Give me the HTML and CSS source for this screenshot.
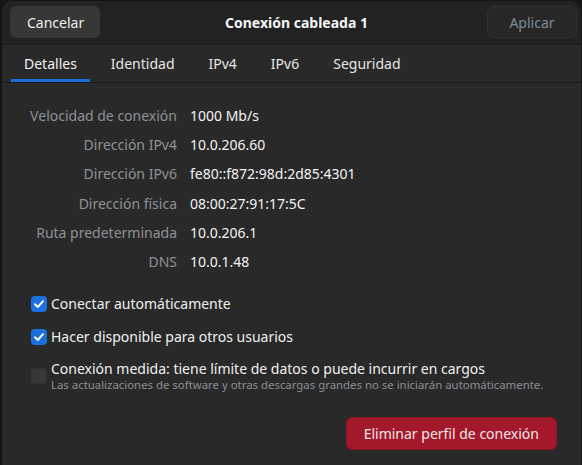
FILE: index.html
```html
<!DOCTYPE html>
<html lang="es">
<head>
<meta charset="utf-8">
<title>Conexión cableada 1</title>
<link rel="stylesheet" href="styles.css">
</head>
<body>
<div class="window">
  <header class="headerbar">
    <button class="btn btn-cancel">Cancelar</button>
    <div class="title">Conexión cableada 1</div>
    <button class="btn btn-apply" disabled>Aplicar</button>
  </header>
  <nav class="tabs">
    <div class="tab active">Detalles</div>
    <div class="tab">Identidad</div>
    <div class="tab">IPv4</div>
    <div class="tab">IPv6</div>
    <div class="tab">Seguridad</div>
  </nav>
  <main class="content">
    <div class="details">
      <div class="label">Velocidad de conexión</div><div class="value">1000 Mb/s</div>
      <div class="label">Dirección IPv4</div><div class="value">10.0.206.60</div>
      <div class="label">Dirección IPv6</div><div class="value">fe80::f872:98d:2d85:4301</div>
      <div class="label">Dirección física</div><div class="value">08:00:27:91:17:5C</div>
      <div class="label">Ruta predeterminada</div><div class="value">10.0.206.1</div>
      <div class="label">DNS</div><div class="value">10.0.1.48</div>
    </div>
    <div class="checks">
      <label class="check-row">
        <span class="box checked"><svg viewBox="0 0 16 16" width="16" height="16"><path d="M4 8.3 L6.8 11 L12 5.2" fill="none" stroke="#fff" stroke-width="2" stroke-linecap="round" stroke-linejoin="round"/></svg></span>
        <span class="check-text">Conectar automáticamente</span>
      </label>
      <label class="check-row">
        <span class="box checked"><svg viewBox="0 0 16 16" width="16" height="16"><path d="M4 8.3 L6.8 11 L12 5.2" fill="none" stroke="#fff" stroke-width="2" stroke-linecap="round" stroke-linejoin="round"/></svg></span>
        <span class="check-text">Hacer disponible para otros usuarios</span>
      </label>
      <label class="check-row">
        <span class="box"></span>
        <span class="check-text">
          <span class="check-title">Conexión medida: tiene límite de datos o puede incurrir en cargos</span>
          <span class="check-sub">Las actualizaciones de software y otras descargas grandes no se iniciarán automáticamente.</span>
        </span>
      </label>
    </div>
    <div class="actions">
      <button class="btn btn-danger">Eliminar perfil de conexión</button>
    </div>
  </main>
</div>
</body>
</html>
```
FILE: styles.css
```css
html, body {
  margin: 0;
  padding: 0;
  background: #161616;
  height: 100%;
  overflow: hidden;
}
body {
  font-family: "Noto Sans", "Open Sans", sans-serif;
  font-size: 14px;
  color: #f2f2f2;
}
.window {
  width: 579px;
  height: 470px;
  background: #292929;
  border-left: 2px solid #141414;
  border-top: 1px solid #141414;
  border-right: 1px solid #141414;
  border-radius: 12px 12px 0 0;
  display: flex;
  flex-direction: column;
  overflow: hidden;
}
.headerbar {
  display: flex;
  align-items: center;
  justify-content: space-between;
  padding: 5px 4px 6px 8px;
  background: #222222;
  border-bottom: 1px solid #1a1a1a;
}
.btn {
  font-family: inherit;
  font-size: 14px;
  height: 32px;
  border-radius: 6px;
  border: none;
  padding: 0 17px;
  cursor: default;
}
.btn-cancel {
  width: 90px;
  background: #373737;
  color: #eeeeee;
}
.btn-apply {
  width: 90px;
  background: #272727;
  border: 1px solid #303030;
  color: #7b8c9c;
}
.title {
  font-weight: bold;
  font-size: 14px;
  color: #f4f4f4;
  margin-left: 6px;
}
.tabs {
  display: flex;
  gap: 8px;
  padding: 0 0 0 9px;
  height: 37px;
  border-bottom: 1px solid #1a1a1a;
  background: #292929;
}
.tab {
  display: flex;
  align-items: center;
  padding: 0 13px;
  color: #e6e6e6;
  border-bottom: 3px solid transparent;
  padding-top: 3px;
}
.tab.active {
  border-bottom-color: #1b70e0;
  color: #f2f2f2;
}
.content {
  flex: 1;
  padding: 18px 24px 0 0;
  display: flex;
  flex-direction: column;
}
.details {
  display: grid;
  grid-template-columns: 175px auto;
  column-gap: 13px;
  grid-auto-rows: 29.2px;
  align-items: center;
}
.label {
  text-align: right;
  color: #8d9297;
}
.value {
  color: #f2f2f2;
}
.checks {
  display: flex;
  flex-direction: column;
  gap: 13px;
  padding-left: 29px;
  margin-top: 18px;
}
.check-row {
  display: flex;
  align-items: center;
  gap: 4px;
  min-height: 20px;
}
.box {
  width: 16px;
  height: 16px;
  flex: none;
  border-radius: 4px;
  background: #383838;
  box-shadow: inset 0 0 0 1px #323232;
  display: flex;
}
.box.checked {
  background: #1b70e0;
  box-shadow: none;
}
.check-text {
  display: flex;
  flex-direction: column;
  color: #f0f0f0;
  line-height: 20px;
}
.check-title {
  line-height: 18px;
}
.check-sub {
  font-size: 11.4px;
  line-height: 14px;
  color: #8a8f94;
}
.actions {
  display: flex;
  justify-content: flex-end;
  margin-top: 25px;
}
.btn-danger {
  background: #a3182b;
  border: 1px solid #8c1425;
  color: #f3e6e8;
  height: 33px;
}
```
